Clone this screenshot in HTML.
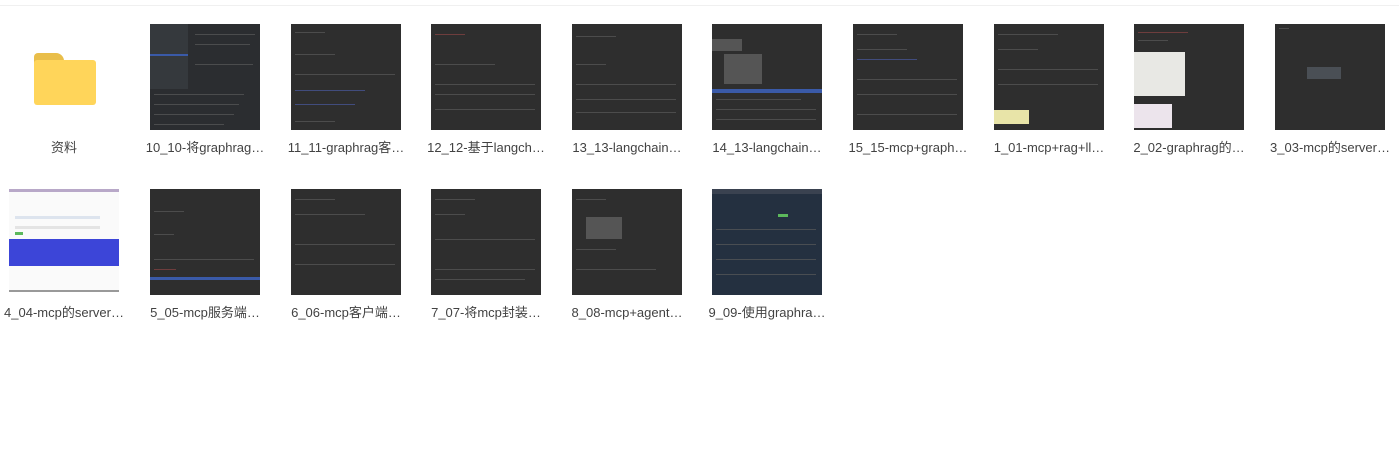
<!DOCTYPE html>
<html><head><meta charset="utf-8"><style>
html,body{margin:0;padding:0;background:#fff;width:1399px;height:458px;overflow:hidden;position:relative;font-family:"Liberation Sans","Noto Sans CJK SC",sans-serif}
.top{position:absolute;left:0;top:5px;width:1399px;height:1px;background:#f0f0f0}
.t{position:absolute;width:110px;height:106px;background:#2e2e2e;overflow:hidden}
.t i{position:absolute;left:4px;height:1px;background:#5a5a5a;opacity:.7}
.l{position:absolute;width:130px;text-align:center;font-size:13px;color:#424242;white-space:nowrap;line-height:16px}
.bar{position:absolute;left:0;width:110px;height:3px;background:#3a5aa8}
.box{position:absolute;background:#666}
</style></head><body>
<div class="top"></div>
<!-- folder -->
<div style="position:absolute;left:34px;top:53px;width:30px;height:14px;background:#e9be4a;border-radius:4px 8px 0 0"></div>
<div style="position:absolute;left:34px;top:60px;width:62px;height:45px;background:#ffd55a;border-radius:3px"></div>
<div class="l" style="left:-1px;top:140px">资料</div>

<div class="t" style="left:150px;top:24px;background:#2b2d30"><div class="box" style="left:0;top:0;width:38px;height:65px;background:#35393d"></div><div class="bar" style="top:30px;width:38px;height:2px"></div><i style="top:10px;width:60px;left:45px"></i><i style="top:20px;width:55px;left:45px"></i><i style="top:40px;width:58px;left:45px"></i><i style="top:70px;width:90px"></i><i style="top:80px;width:85px"></i><i style="top:90px;width:80px"></i><i style="top:100px;width:70px"></i></div>
<div class="l" style="left:140px;top:140px">10_10-将graphrag…</div>

<div class="t" style="left:291px;top:24px"><i style="top:8px;width:30px"></i><i style="top:30px;width:40px"></i><i style="top:50px;width:100px"></i><i style="top:66px;width:70px;background:#4a5aa0"></i><i style="top:80px;width:60px;background:#4a5aa0"></i><i style="top:97px;width:40px"></i></div>
<div class="l" style="left:281px;top:140px">11_11-graphrag客…</div>

<div class="t" style="left:431px;top:24px"><i style="top:10px;width:30px;background:#8a4444"></i><i style="top:40px;width:60px"></i><i style="top:60px;width:100px"></i><i style="top:70px;width:100px"></i><i style="top:85px;width:100px"></i></div>
<div class="l" style="left:421px;top:140px">12_12-基于langch…</div>

<div class="t" style="left:572px;top:24px"><i style="top:12px;width:40px"></i><i style="top:40px;width:30px"></i><i style="top:60px;width:100px"></i><i style="top:75px;width:100px"></i><i style="top:88px;width:100px"></i></div>
<div class="l" style="left:562px;top:140px">13_13-langchain…</div>

<div class="t" style="left:712px;top:24px"><div class="box" style="left:0;top:15px;width:30px;height:12px;background:#555"></div><div class="box" style="left:12px;top:30px;width:38px;height:30px;background:#555"></div><div class="bar" style="top:65px;height:4px"></div><i style="top:75px;width:85px"></i><i style="top:85px;width:100px"></i><i style="top:95px;width:100px"></i></div>
<div class="l" style="left:702px;top:140px">14_13-langchain…</div>

<div class="t" style="left:853px;top:24px"><i style="top:10px;width:40px"></i><i style="top:25px;width:50px"></i><i style="top:35px;width:60px;background:#4a5aa0"></i><i style="top:55px;width:100px"></i><i style="top:70px;width:100px"></i><i style="top:90px;width:100px"></i></div>
<div class="l" style="left:843px;top:140px">15_15-mcp+graph…</div>

<div class="t" style="left:994px;top:24px"><i style="top:10px;width:60px"></i><i style="top:25px;width:40px"></i><i style="top:45px;width:100px"></i><i style="top:60px;width:100px"></i><div class="box" style="left:0;top:86px;width:35px;height:14px;background:#e8e4a8"></div></div>
<div class="l" style="left:984px;top:140px">1_01-mcp+rag+ll…</div>

<div class="t" style="left:1134px;top:24px"><i style="top:8px;width:50px;background:#8a4444"></i><i style="top:16px;width:30px"></i><div class="box" style="left:0;top:28px;width:51px;height:44px;background:#e8e8e4"></div><div class="box" style="left:0;top:80px;width:38px;height:24px;background:#ece4ec"></div></div>
<div class="l" style="left:1124px;top:140px">2_02-graphrag的…</div>

<div class="t" style="left:1275px;top:24px"><div class="box" style="left:32px;top:43px;width:34px;height:12px;background:#4a4f55"></div><i style="top:4px;width:10px"></i></div>
<div class="l" style="left:1265px;top:140px">3_03-mcp的server…</div>

<div class="t" style="left:9px;top:189px;height:103px;background:#fafafa"><div class="box" style="left:0;top:0;width:110px;height:3px;background:#b8a8c8"></div><div class="box" style="left:6px;top:27px;width:85px;height:3px;background:#dde4ee"></div><div class="box" style="left:6px;top:37px;width:85px;height:3px;background:#e4e4e4"></div><div class="box" style="left:6px;top:43px;width:8px;height:3px;background:#5cb85c"></div><div class="box" style="left:0;top:50px;width:110px;height:27px;background:#3c45d8"></div><div class="box" style="left:0;top:101px;width:110px;height:2px;background:#999"></div></div>
<div class="l" style="left:-1px;top:305px">4_04-mcp的server…</div>

<div class="t" style="left:150px;top:189px"><i style="top:22px;width:30px"></i><i style="top:45px;width:20px"></i><i style="top:70px;width:100px"></i><i style="top:80px;width:22px;background:#8a4444"></i><div class="bar" style="top:88px"></div></div>
<div class="l" style="left:140px;top:305px">5_05-mcp服务端…</div>

<div class="t" style="left:291px;top:189px"><i style="top:10px;width:40px"></i><i style="top:25px;width:70px"></i><i style="top:55px;width:100px"></i><i style="top:75px;width:100px"></i></div>
<div class="l" style="left:281px;top:305px">6_06-mcp客户端…</div>

<div class="t" style="left:431px;top:189px"><i style="top:10px;width:40px"></i><i style="top:25px;width:30px"></i><i style="top:50px;width:100px"></i><i style="top:80px;width:100px"></i><i style="top:90px;width:90px"></i></div>
<div class="l" style="left:421px;top:305px">7_07-将mcp封装…</div>

<div class="t" style="left:572px;top:189px"><div class="box" style="left:14px;top:28px;width:36px;height:22px;background:#555"></div><i style="top:10px;width:30px"></i><i style="top:60px;width:40px"></i><i style="top:80px;width:80px"></i></div>
<div class="l" style="left:562px;top:305px">8_08-mcp+agent…</div>

<div class="t" style="left:712px;top:189px;background:#243040"><div class="box" style="left:0;top:0;width:110px;height:5px;background:#3a4250"></div><div class="box" style="left:66px;top:25px;width:10px;height:3px;background:#5cb85c"></div><i style="top:40px;width:100px"></i><i style="top:55px;width:100px"></i><i style="top:70px;width:100px"></i><i style="top:85px;width:100px"></i></div>
<div class="l" style="left:702px;top:305px">9_09-使用graphra…</div>
</body></html>
